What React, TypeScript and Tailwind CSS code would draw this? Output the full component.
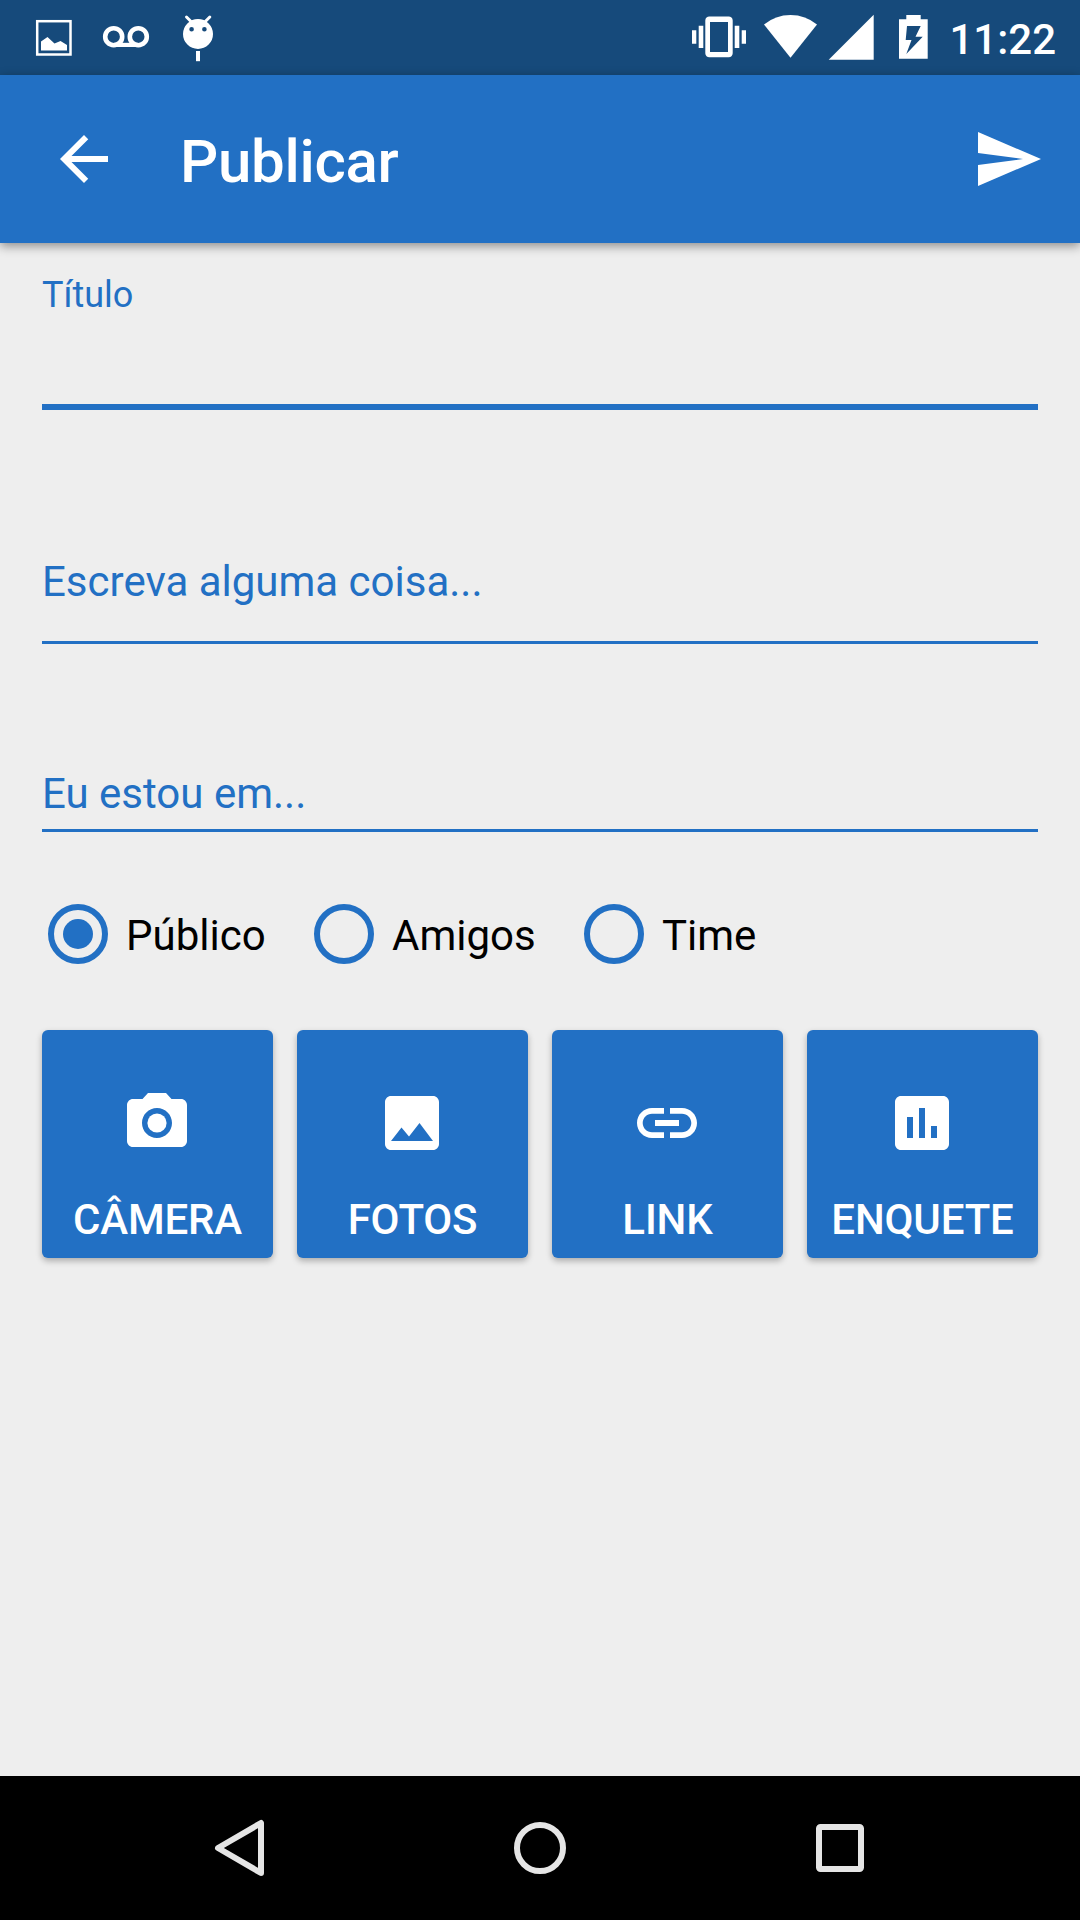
import React, { useState } from "react";

function StatusBar() {
  return (
    <div className="flex h-[75px] shrink-0 items-start justify-between bg-[#164a7b] text-white">
      <svg className="h-[75px] w-[230px]" viewBox="0 0 230 75" fill="currentColor">
        <rect x="37.2" y="21.2" width="33.3" height="33.3" fill="none" stroke="currentColor" strokeWidth="2.5" />
        <path d="M41 50.5V41.5L47.5 37L54.5 43.5L60.5 41L67 45V50.5Z" />
        <g fill="none" stroke="currentColor" strokeWidth="4.6">
          <circle cx="113.7" cy="36.7" r="8.5" />
          <circle cx="138.3" cy="36.7" r="8.5" />
          <path d="M113.7 44.9H138.3" strokeWidth="4.2" />
        </g>
        <path d="M186.5 17L192 22.5M209.8 17L204.3 22.5" stroke="currentColor" strokeWidth="3" strokeLinecap="round" />
        <path
          fillRule="evenodd"
          d="M183 34a15 15 0 1 0 30 0a15 15 0 1 0 -30 0ZM189.3 29.3a2.3 2.3 0 1 0 4.6 0a2.3 2.3 0 1 0 -4.6 0ZM202.1 29.3a2.3 2.3 0 1 0 4.6 0a2.3 2.3 0 1 0 -4.6 0Z"
        />
        <rect x="196" y="51" width="4" height="10.2" />
      </svg>
      <div className="flex items-start gap-[9px] pr-[24px]">
        <svg className="h-[75px] w-[260px]" viewBox="680 0 260 75" fill="currentColor">
          <path
            fillRule="evenodd"
            d="M709.5 16.5H728.5A4 4 0 0 1 732.7 20.5V53.3A4 4 0 0 1 728.5 57.3H709.5A4 4 0 0 1 705.3 53.3V20.5A4 4 0 0 1 709.5 16.5ZM710 22V52H728V22Z"
          />
          <path d="M698.7 25.7H703.3V48H698.7ZM692 30.3H696.3V43.7H692ZM734.7 25.7H739.3V48H734.7ZM741.7 30.3H746V43.7H741.7Z" />
          <path d="M764 24.5Q775.5 15 790.5 15Q805.5 15 817 24.5L790.5 57.7Z" />
          <path d="M828.7 59.7L873.7 14.7V59.7Z" />
          <path
            fillRule="evenodd"
            d="M906.3 15H920.7V19.3H927.7V58.7H899V19.3H906.3ZM907 26L905.7 40H911.5L906.3 54L922.7 36.7H915.5L920.7 26Z"
          />
        </svg>
        <span className="mt-[19px] text-[42px] leading-[42px] font-medium">11:22</span>
      </div>
    </div>
  );
}

function AppBar() {
  return (
    <header className="z-10 flex h-[168px] shrink-0 items-center bg-[#2270c4] pr-[36px] pl-[48px] text-white shadow-[0_3px_10px_rgba(0,0,0,0.42)]">
      <svg className="size-[72px] shrink-0" viewBox="0 0 24 24" fill="currentColor">
        <path d="M20 11H7.83l5.59-5.59L12 4l-8 8 8 8 1.41-1.41L7.83 13H20v-2z" />
      </svg>
      <h1 className="mt-[6px] ml-[60px] flex-1 text-[60px] leading-[70px] font-medium tracking-[-0.3px]">Publicar</h1>
      <svg className="size-[72px] shrink-0" viewBox="0 0 24 24" fill="currentColor">
        <path d="M2.01 21L23 12 2.01 3 2 10l15 2-15 2z" />
      </svg>
    </header>
  );
}

const audiences = [
  { label: "Público", width: "w-[266px]" },
  { label: "Amigos", width: "w-[270px]" },
  { label: "Time", width: "w-[200px]" },
];

const actions = [
  {
    label: "CÂMERA",
    icon: (
      <>
        <circle cx="12" cy="12" r="3.2" />
        <path d="M9 2L7.17 4H4c-1.1 0-2 .9-2 2v12c0 1.1.9 2 2 2h16c1.1 0 2-.9 2-2V6c0-1.1-.9-2-2-2h-3.17L15 2H9zm3 15c-2.76 0-5-2.24-5-5s2.24-5 5-5 5 2.24 5 5-2.24 5-5 5z" />
      </>
    ),
  },
  {
    label: "FOTOS",
    icon: (
      <path d="M21 19V5c0-1.1-.9-2-2-2H5c-1.1 0-2 .9-2 2v14c0 1.1.9 2 2 2h14c1.1 0 2-.9 2-2zM8.5 13.5l2.5 3.01L14.5 12l4.5 6H5l3.5-4.5z" />
    ),
  },
  {
    label: "LINK",
    icon: (
      <path d="M3.9 12c0-1.71 1.39-3.1 3.1-3.1h4V7H7c-2.76 0-5 2.24-5 5s2.24 5 5 5h4v-1.9H7c-1.71 0-3.1-1.39-3.1-3.1zM8 13h8v-2H8v2zm9-6h-4v1.9h4c1.71 0 3.1 1.39 3.1 3.1s-1.39 3.1-3.1 3.1h-4V17h4c2.76 0 5-2.24 5-5s-2.24-5-5-5z" />
    ),
  },
  {
    label: "ENQUETE",
    icon: (
      <path d="M19 3H5c-1.1 0-2 .9-2 2v14c0 1.1.9 2 2 2h14c1.1 0 2-.9 2-2V5c0-1.1-.9-2-2-2zM9 17H7v-7h2v7zm4 0h-2V7h2v10zm4 0h-2v-4h2v4z" />
    ),
  },
];

function Form() {
  const [audience, setAudience] = useState("Público");
  return (
    <main className="flex-1 px-[42px] pt-[31px] text-[42px] leading-[42px] text-[#2270c4]">
      <div className="h-[136px] border-b-[6px] border-[#2270c4] text-[36px]">Título</div>
      <div className="mt-[151px] h-[83px] border-b-[3px] border-[#2270c4]">Escreva alguma coisa...</div>
      <div className="mt-[129px] h-[59px] border-b-[3px] border-[#2270c4]">Eu estou em...</div>

      <div role="radiogroup" className="mt-[72px] flex h-[60px] pl-[6px]">
        {audiences.map(({ label, width }) => (
          <button
            key={label}
            role="radio"
            aria-checked={audience === label}
            onClick={() => setAudience(label)}
            className={`flex shrink-0 items-center gap-[18px] ${width}`}
          >
            <span className="flex size-[60px] items-center justify-center rounded-full border-[6px] border-[#2270c4]">
              {audience === label && <span className="size-[30px] rounded-full bg-[#2270c4]" />}
            </span>
            <span className="mt-[3px] text-black">{label}</span>
          </button>
        ))}
      </div>

      <div className="mt-[66px] grid grid-cols-4 gap-[24px]">
        {actions.map(({ label, icon }) => (
          <button
            key={label}
            className="flex h-[228px] flex-col items-center rounded-[6px] bg-[#2270c4] pt-[57px] font-medium text-white shadow-[0_3px_6px_rgba(0,0,0,0.28)]"
          >
            <svg className="mr-px size-[72px] shrink-0" viewBox="0 0 24 24" fill="currentColor">
              {icon}
            </svg>
            <span className="mt-[40px] tracking-[-0.15px]">{label}</span>
          </button>
        ))}
      </div>
    </main>
  );
}

function NavigationBar() {
  return (
    <nav className="flex h-[144px] shrink-0 items-center justify-center gap-[228px] bg-black text-[#e5e5e5]">
      <svg className="size-[72px]" viewBox="0 0 72 72" fill="none" stroke="currentColor" strokeWidth="6" strokeLinejoin="round">
        <path d="M57 11V61L14 36Z" />
      </svg>
      <svg className="size-[72px]" viewBox="0 0 72 72" fill="none" stroke="currentColor" strokeWidth="6">
        <circle cx="36" cy="36" r="23" />
      </svg>
      <svg className="size-[72px]" viewBox="0 0 72 72" fill="none" stroke="currentColor" strokeWidth="6">
        <rect x="15" y="15" width="42" height="42" rx="1.5" />
      </svg>
    </nav>
  );
}

export default function App() {
  return (
    <div className="flex h-[1920px] w-[1080px] flex-col overflow-hidden bg-[#eeeeee] font-['Roboto',sans-serif]">
      <StatusBar />
      <AppBar />
      <Form />
      <NavigationBar />
    </div>
  );
}
